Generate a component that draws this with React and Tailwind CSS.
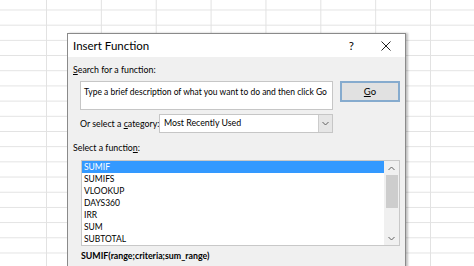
const FUNCTIONS = ['SUMIF', 'SUMIFS', 'VLOOKUP', 'DAYS360', 'IRR', 'SUM', 'SUBTOTAL']

function Chevron({ up }) {
  return (
    <svg width="7" height="5" viewBox="0 0 7 5" className="block">
      <path d={up ? 'M0.5 4 L3.5 1 L6.5 4' : 'M0.5 1 L3.5 4 L6.5 1'} fill="none" stroke="#606060" strokeWidth="1" />
    </svg>
  )
}

export default function App() {
  return (
    <div className="relative w-[474px] h-[266px] overflow-hidden bg-white [background-image:linear-gradient(to_right,#e2e2e2_1px,transparent_1px),linear-gradient(to_bottom,#e2e2e2_1px,transparent_1px)] [background-size:54.86px_100%,100%_15.2px] [background-position:46px_0,0_9.5px] font-['Lato',sans-serif] text-black">
      {/* dialog */}
      <div className="absolute left-[67px] top-[33px] w-[339px] h-[260px] bg-[#f0f0f0] border border-[#8a8a8a] shadow-[2px_0_2px_rgba(0,0,0,0.25)]">
        <div className="h-[23px] bg-white flex items-center pl-[5px] pr-[14px]">
          <span className="text-[11.5px] leading-none">Insert Function</span>
          <span className="ml-auto text-[11.5px] leading-none mr-[27px]">?</span>
          <svg width="10" height="10" viewBox="0 0 10 10">
            <path d="M0.5 0.5 L9.5 9.5 M9.5 0.5 L0.5 9.5" stroke="#222" strokeWidth="1" />
          </svg>
        </div>

        <p className="mt-[7px] ml-[5px] text-[8.8px] leading-[12px]"><u>S</u>earch for a function:</p>

        <div className="mt-[5px] ml-[12px] flex items-start gap-[7px]">
          <div className="w-[253px] h-[29px] bg-white border border-[#c6c6c6] px-[3px] pt-[4px] text-[8.5px] leading-[12px] whitespace-nowrap overflow-hidden">
            Type a brief description of what you want to do and then click Go
          </div>
          <button className="w-[60px] h-[21px] bg-[#e1e1e1] border-2 border-[#86abce] flex items-center justify-center text-[9.5px] leading-none">
            <span><u>G</u>o</span>
          </button>
        </div>

        <div className="mt-[4px] ml-[12px] flex items-center">
          <span className="w-[79px] whitespace-nowrap text-[8.8px] leading-[12px]">Or select a <u>c</u>ategory:</span>
          <div className="w-[174px] h-[19px] bg-white border border-[#c6c6c6] flex items-center">
            <span className="pl-[4px] text-[8.8px] leading-none">Most Recently Used</span>
            <div className="ml-auto h-full w-[14px] bg-[#e6e6e6] border-l border-[#cccccc] flex items-center justify-center">
              <Chevron />
            </div>
          </div>
        </div>

        <p className="mt-[9px] ml-[5px] text-[8.8px] leading-[12px]">Select a functio<u>n</u>:</p>

        <div className="mt-[6px] ml-[13px] w-[319px] h-[86px] bg-white border border-[#c8c8c8] flex">
          <div className="flex-1">
            {FUNCTIONS.map((f, i) => (
              <div key={f} className={`h-[12px] pl-[2px] text-[8.5px] leading-[12px] ${i === 0 ? 'bg-[#3399ff] text-white' : ''}`}>{f}</div>
            ))}
          </div>
          <div className="w-[15px] bg-[#f0f0f0] flex flex-col items-center">
            <div className="h-[14px] flex items-center"><Chevron up /></div>
            <div className="w-[12px] h-[33px] bg-[#cdcdcd]" />
            <div className="mt-auto h-[14px] flex items-center"><Chevron /></div>
          </div>
        </div>

        <p className="mt-[4px] ml-[13px] text-[8.8px] leading-[12px] font-bold">SUMIF(range;criteria;sum_range)</p>
      </div>
    </div>
  )
}
